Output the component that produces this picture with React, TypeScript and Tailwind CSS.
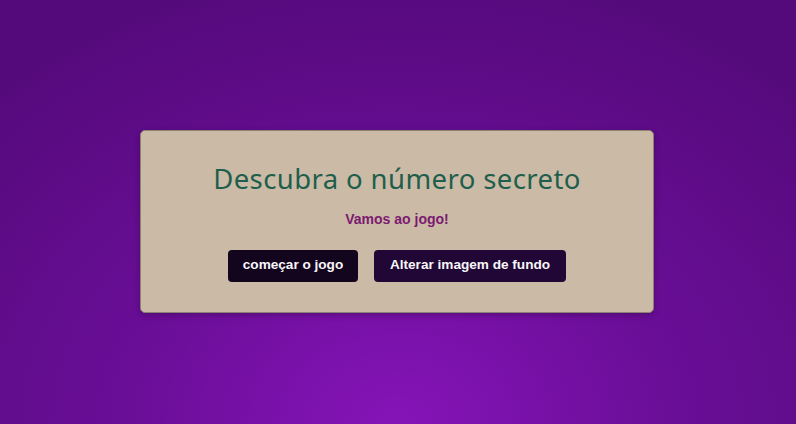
export default function App() {
  return (
    <div className="w-[796px] h-[424px] pt-[18px] flex items-center justify-center bg-[radial-gradient(ellipse_75%_110%_at_50%_100%,#8614b8_0%,#6a0e98_45%,#540a7a_100%)]">
      <div className="w-[514px] h-[183px] mr-[2px] bg-[#cbbba6] border border-[#8c8272] rounded-[5px] shadow-[0_2px_6px_rgba(0,0,0,0.25)] flex flex-col items-center pt-[28px]">
        <h1 className="text-[27.5px] leading-[40px] text-[#1f5e4c] tracking-[0.4px]" style={{ fontFamily: '"Noto Sans", sans-serif' }}>
          Descubra o número secreto
        </h1>
        <p className="mt-[11px] text-[14px] leading-[18px] font-bold text-[#7b1a70]" style={{ fontFamily: '"Liberation Sans", Arial, sans-serif' }}>
          Vamos ao jogo!
        </p>
        <div className="mt-[22px] flex gap-[16px]" style={{ fontFamily: '"Liberation Sans", Arial, sans-serif' }}>
          <button className="w-[130px] h-[32px] rounded-[4px] bg-[#14051f] text-[#f8f6f8] text-[13.6px] font-bold">
            começar o jogo
          </button>
          <button className="w-[192px] h-[32px] rounded-[4px] bg-[#200736] text-[#f8f6f8] text-[13.6px] font-bold">
            Alterar imagem de fundo
          </button>
        </div>
      </div>
    </div>
  );
}
